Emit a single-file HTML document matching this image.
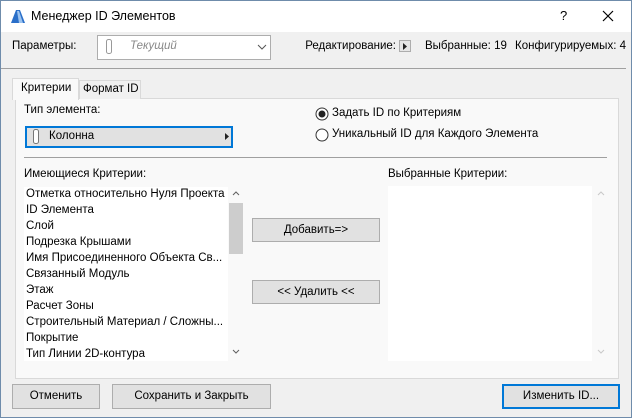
<!DOCTYPE html>
<html><head><meta charset="utf-8"><style>
*{margin:0;padding:0;box-sizing:border-box}
body{width:632px;height:418px;overflow:hidden;background:#f0f0f0;font-family:"Liberation Sans","DejaVu Sans",sans-serif;font-size:11.5px;color:#000;position:relative}
.a{position:absolute;white-space:nowrap}
.win{position:absolute;left:0;top:0;width:632px;height:418px;border:1px solid #6f8cab}
.btn{position:absolute;background:#e1e1e1;border:1px solid #adadad;text-align:center;font-size:11.5px}
.li{position:absolute;left:26px;font-size:11.5px;line-height:16px}
</style></head><body>
<div class="a" style="left:0;top:0;width:632px;height:32px;background:#fff"></div>
<svg class="a" style="left:10px;top:8px" width="16" height="16" viewBox="0 0 16 16"><path d="M1 15 L6 2 L10 2 L15 15 Z" fill="#2a6fc9"/><path d="M7 3 L9 3 L13 15 L9 15 Z" fill="#9cc3ef"/></svg>
<div class="a" style="left:31px;top:9px;font-size:12.5px">Менеджер ID Элементов</div>
<div class="a" style="left:560px;top:8px;font-size:13px">?</div>
<svg class="a" style="left:602px;top:10px" width="12" height="12"><path d="M1 1 L11 11 M11 1 L1 11" stroke="#000" stroke-width="1.2"/></svg>

<div class="a" style="left:12px;top:40px">Параметры:</div>
<div class="a" style="left:97px;top:35px;width:174px;height:25px;border:1px solid #adadad;background:#fff"></div>
<svg class="a" style="left:106px;top:39px" width="6" height="16"><rect x="0.5" y="0.5" width="5" height="14" rx="2" fill="#fff" stroke="#999"/></svg>
<div class="a" style="left:130px;top:40px;color:#888;font-style:italic">Текущий</div>
<svg class="a" style="left:257px;top:44px" width="10" height="6"><path d="M1 1 L5 5 L9 1" fill="none" stroke="#555"/></svg>
<div class="a" style="left:296px;top:40px;width:100px;text-align:right">Редактирование:</div>
<div class="a" style="left:399px;top:40px;width:12px;height:12px;border:1px solid #adadad;background:#e6e6e6"></div>
<svg class="a" style="left:403px;top:43px" width="5" height="7"><path d="M0 0 L4 3.5 L0 7Z" fill="#222"/></svg>
<div class="a" style="left:425px;top:40px">Выбранные: 19</div>
<div class="a" style="right:6px;top:40px">Конфигурируемых: 4</div>
<div class="a" style="left:1px;top:68px;width:625px;height:1px;background:#a0a0a0"></div>

<div class="a" style="left:15px;top:98px;width:604px;height:281px;border:1px solid #d9d9d9;background:#f9f9f9"></div>
<div class="a" style="left:12px;top:78px;width:67px;height:22px;border:1px solid #d9d9d9;border-bottom:none;background:#f9f9f9;padding:3px 0 0 8px">Критерии</div>
<div class="a" style="left:79px;top:80px;width:62px;height:19px;border:1px solid #d9d9d9;border-bottom:none;background:#f0f0f0;padding:2px 0 0 3px">Формат ID</div>

<div class="a" style="left:24px;top:104px">Тип элемента:</div>
<div class="a" style="left:25px;top:126px;width:208px;height:22px;border:2px solid #0078d7;background:#e1e1e1"></div>
<svg class="a" style="left:33px;top:129px" width="6" height="16"><rect x="0.5" y="0.5" width="5" height="14" rx="2" fill="#fff" stroke="#777"/></svg>
<div class="a" style="left:49px;top:130px">Колонна</div>
<svg class="a" style="left:225px;top:133px" width="4" height="7"><path d="M0 0 L4 3.5 L0 7Z" fill="#222"/></svg>

<svg class="a" style="left:315px;top:107px" width="14" height="14"><circle cx="7" cy="7" r="6" fill="#fff" stroke="#333"/><circle cx="7" cy="7" r="3.5" fill="#222"/></svg>
<div class="a" style="left:332px;top:107px">Задать ID по Критериям</div>
<svg class="a" style="left:315px;top:128px" width="14" height="14"><circle cx="7" cy="7" r="6" fill="#fff" stroke="#333"/></svg>
<div class="a" style="left:332px;top:128px">Уникальный ID для Каждого Элемента</div>
<div class="a" style="left:24px;top:157px;width:583px;height:1px;background:#a0a0a0"></div>

<div class="a" style="left:24px;top:168px">Имеющиеся Критерии:</div>
<div class="a" style="left:24px;top:187px;width:204px;height:174px;background:#fff"></div>
<div class="a" style="left:229px;top:203px;width:14px;height:51px;background:#cdcdcd"></div>
<svg class="a" style="left:232px;top:191px" width="8" height="5"><path d="M1 4 L4 1 L7 4" fill="none" stroke="#606060"/></svg>
<svg class="a" style="left:232px;top:349px" width="8" height="5"><path d="M1 1 L4 4 L7 1" fill="none" stroke="#606060"/></svg>
<div class="li" style="top:186px">Отметка относительно Нуля Проекта</div>
<div class="li" style="top:202px">ID Элемента</div>
<div class="li" style="top:218px">Слой</div>
<div class="li" style="top:234px">Подрезка Крышами</div>
<div class="li" style="top:250px">Имя Присоединенного Объекта Св...</div>
<div class="li" style="top:266px">Связанный Модуль</div>
<div class="li" style="top:282px">Этаж</div>
<div class="li" style="top:298px">Расчет Зоны</div>
<div class="li" style="top:314px">Строительный Материал / Сложны...</div>
<div class="li" style="top:330px">Покрытие</div>
<div class="li" style="top:346px">Тип Линии 2D-контура</div>

<div class="btn" style="left:252px;top:218px;width:128px;height:24px;line-height:22px">Добавить=&gt;</div>
<div class="btn" style="left:252px;top:280px;width:128px;height:24px;line-height:22px">&lt;&lt; Удалить &lt;&lt;</div>

<div class="a" style="left:388px;top:168px">Выбранные Критерии:</div>
<div class="a" style="left:388px;top:186px;width:204px;height:175px;background:#fff"></div>
<svg class="a" style="left:597px;top:191px" width="8" height="5"><path d="M1 4 L4 1 L7 4" fill="none" stroke="#c8c8c8"/></svg>
<svg class="a" style="left:597px;top:349px" width="8" height="5"><path d="M1 1 L4 4 L7 1" fill="none" stroke="#c8c8c8"/></svg>

<div class="btn" style="left:12px;top:384px;width:88px;height:25px;line-height:23px">Отменить</div>
<div class="btn" style="left:112px;top:384px;width:159px;height:25px;line-height:23px">Сохранить и Закрыть</div>
<div class="btn" style="left:502px;top:384px;width:118px;height:25px;line-height:21px;border:2px solid #0078d7">Изменить ID...</div>
<div class="win"></div>
</body></html>
